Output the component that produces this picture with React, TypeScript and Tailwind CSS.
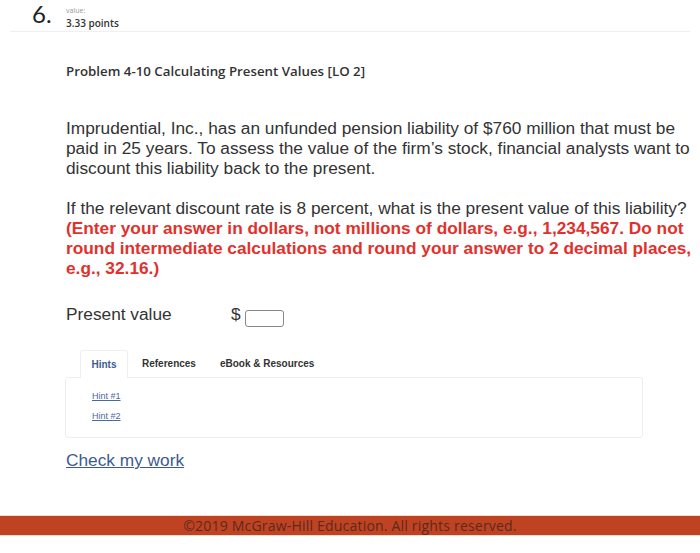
import React from "react";

export default function App() {
  const sans = { fontFamily: '"Liberation Sans", Arial, sans-serif' };
  const prox = { fontFamily: '"Open Sans", Lato, sans-serif' };
  return (
    <div className="w-[700px] h-[553px] bg-white relative overflow-hidden text-[#333]" style={sans}>
      {/* header */}
      <div className="mx-[10px] flex border-b border-[#f0f0f0] h-[32px]">
        <div className="w-[56px] pl-[22px] text-[24px] leading-none pt-[2px] text-[#222]" style={{ fontFamily: 'Lato, sans-serif' }}>6.</div>
        <div className="flex flex-col pt-[6px]" style={prox}>
          <span className="text-[7px] leading-[9px] text-[#999]">value:</span>
          <span className="mt-[2px] text-[10px] leading-[12px] font-semibold text-[#333]">3.33 points</span>
        </div>
      </div>

      <div className="pl-[66px] pr-[4px]">
        <div className="mt-[31px] text-[13.3px] font-semibold text-[#333] leading-[16px]" style={prox}>
          Problem 4-10 Calculating Present Values [LO 2]
        </div>

        <p className="mt-[39px] text-[17.3px] leading-[20px] text-[#333]">
          Imprudential, Inc., has an unfunded pension liability of $760 million that must be paid in 25 years. To assess the value of the firm’s stock, financial analysts want to discount this liability back to the present.
        </p>

        <p className="mt-[20px] text-[17.3px] leading-[20px] text-[#333]">
          If the relevant discount rate is 8 percent, what is the present value of this liability?{" "}
          <strong className="text-[#e2312c] font-bold">
            (Enter your answer in dollars, not millions of dollars, e.g., 1,234,567. Do not round intermediate calculations and round your answer to 2 decimal places, e.g., 32.16.)
          </strong>
        </p>

        <div className="mt-[27px] flex items-center h-[20px] text-[17.3px]">
          <span className="w-[165px]">Present value</span>
          <span>$</span>
          <span className="ml-[4px] mt-[7px] w-[39px] h-[17px] border border-[#888] rounded-[3px]" />
        </div>
      </div>

      {/* tabs */}
      <div className="ml-[65px] mt-[24px] w-[578px]">
        <div className="flex items-end h-[28px] text-[10px] font-bold" style={sans}>
          <div className="ml-[15px] h-[28px] w-[48px] flex items-center justify-center border border-b-0 border-[#eee] rounded-t-[3px] bg-white text-[#3b5b94] relative top-[1px]">
            Hints
          </div>
          <div className="ml-[14px] h-[28px] flex items-center text-[#333]">References</div>
          <div className="ml-[24px] h-[28px] flex items-center text-[#333]">eBook &amp; Resources</div>
        </div>
        <div className="h-[61px] border border-[#eee] rounded-[3px] pl-[26px] pt-[12px] flex flex-col gap-[8px] text-[9px] leading-[12px]">
          <a className="underline text-[#4a6aa0]">Hint #1</a>
          <a className="underline text-[#4a6aa0]">Hint #2</a>
        </div>
      </div>

      <div className="ml-[66px] mt-[12px] text-[17.3px] leading-[20px]">
        <a className="underline text-[#3d5a8f]">Check my work</a>
      </div>

      {/* footer */}
      <div className="absolute left-0 right-0 top-[515px] border-t border-b border-[#f6d8cc]">
        <div className="h-[19px] bg-[#bf4322] flex items-center justify-center text-[14px] tracking-[0.2px] text-[#5a2a1e]" style={prox}>
          ©2019 McGraw-Hill Education. All rights reserved.
        </div>
      </div>
    </div>
  );
}
